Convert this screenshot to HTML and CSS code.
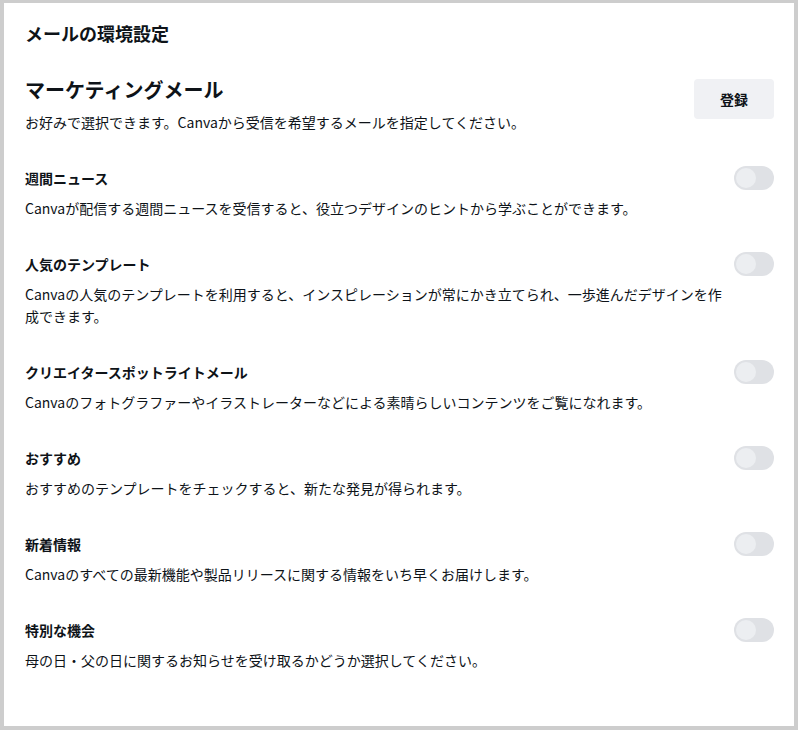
FILE: index.html
```html
<!DOCTYPE html>
<html lang="ja">
<head>
<meta charset="utf-8">
<link rel="stylesheet" href="styles.css">
</head>
<body>
<div class="panel">
  <h1 class="title">メールの環境設定</h1>
  <div class="marketing">
    <div class="marketing-text">
      <h2 class="subtitle">マーケティングメール</h2>
      <p class="lead">お好みで選択できます。Canvaから受信を希望するメールを指定してください。</p>
    </div>
    <button class="btn">登録</button>
  </div>

  <div class="item">
    <div class="item-head"><span class="item-title">週間ニュース</span><span class="toggle"><span class="knob"></span></span></div>
    <p class="desc">Canvaが配信する週間ニュースを受信すると、役立つデザインのヒントから学ぶことができます。</p>
  </div>
  <div class="item">
    <div class="item-head"><span class="item-title">人気のテンプレート</span><span class="toggle"><span class="knob"></span></span></div>
    <p class="desc">Canvaの人気のテンプレートを利用すると、インスピレーションが常にかき立てられ、一歩進んだデザインを作成できます。</p>
  </div>
  <div class="item">
    <div class="item-head"><span class="item-title">クリエイタースポットライトメール</span><span class="toggle"><span class="knob"></span></span></div>
    <p class="desc">Canvaのフォトグラファーやイラストレーターなどによる素晴らしいコンテンツをご覧になれます。</p>
  </div>
  <div class="item">
    <div class="item-head"><span class="item-title">おすすめ</span><span class="toggle"><span class="knob"></span></span></div>
    <p class="desc">おすすめのテンプレートをチェックすると、新たな発見が得られます。</p>
  </div>
  <div class="item">
    <div class="item-head"><span class="item-title">新着情報</span><span class="toggle"><span class="knob"></span></span></div>
    <p class="desc">Canvaのすべての最新機能や製品リリースに関する情報をいち早くお届けします。</p>
  </div>
  <div class="item">
    <div class="item-head"><span class="item-title">特別な機会</span><span class="toggle"><span class="knob"></span></span></div>
    <p class="desc">母の日・父の日に関するお知らせを受け取るかどうか選択してください。</p>
  </div>
</div>
</body>
</html>
```

FILE: styles.css
```css
html, body {
  margin: 0;
  padding: 0;
  background: #cdcdcd;
}
body {
  font-family: "Noto Sans CJK JP", "Noto Sans", sans-serif;
  color: #0e1318;
  padding: 3px 4px 4px 4px;
}
.panel {
  background: #ffffff;
  height: 723px;
  box-sizing: border-box;
  padding: 17px 20px 0 21px;
}
.title {
  margin: 0;
  font-size: 18px;
  line-height: 26px;
  font-weight: 700;
}
.marketing {
  display: flex;
  justify-content: space-between;
  align-items: flex-start;
  margin-top: 30px;
}
.subtitle {
  margin: 0;
  font-size: 20px;
  line-height: 28px;
  font-weight: 700;
}
.lead {
  margin: 7px 0 0 0;
  font-size: 14px;
  line-height: 22px;
}
.btn {
  margin-top: 3px;
  width: 80px;
  height: 40px;
  border: none;
  border-radius: 4px;
  background: #f0f1f4;
  font-family: inherit;
  font-size: 14px;
  font-weight: 700;
  color: #0e1318;
}
.item {
  margin-top: 34px;
}
.item-head {
  display: flex;
  justify-content: space-between;
  align-items: center;
  height: 22px;
}
.item-title {
  font-size: 14px;
  line-height: 22px;
  font-weight: 700;
}
.toggle {
  width: 40px;
  height: 24px;
  border-radius: 12px;
  background: #dfe1e5;
  box-sizing: border-box;
  padding: 2px;
  display: flex;
}
.knob {
  width: 20px;
  height: 20px;
  border-radius: 50%;
  background: #eceef1;
}
.desc {
  margin: 8px 0 0 0;
  font-size: 14px;
  line-height: 22px;
  max-width: 702px;
}
```
